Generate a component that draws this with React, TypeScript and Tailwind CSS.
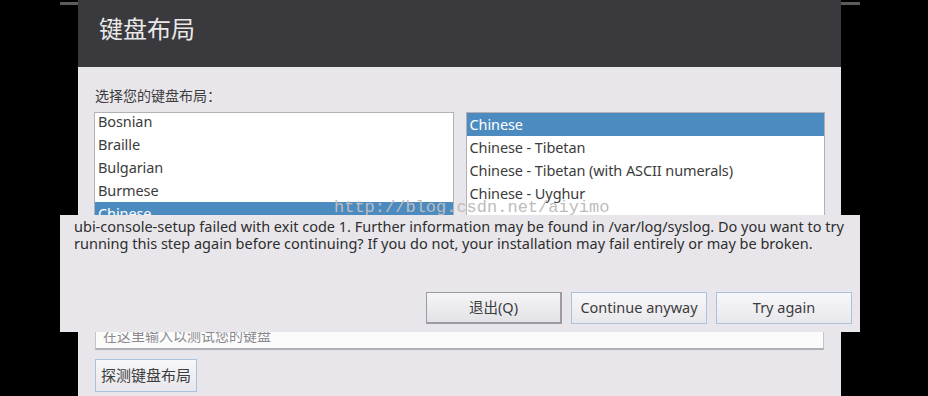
import React from 'react';

const leftItems = ['Bosnian', 'Braille', 'Bulgarian', 'Burmese', 'Chinese'];
const rightItems = ['Chinese', 'Chinese - Tibetan', 'Chinese - Tibetan (with ASCII numerals)', 'Chinese - Uyghur'];

const LayoutList = ({ items, selected, offset }: { items: string[]; selected: string; offset: string }) => {
  return (
    <div className="flex-1 h-[200px] bg-white border border-[#b3b1b6] overflow-hidden">
      <div className={offset}>
        {items.map((item) => (
          <div
            key={item}
            className={
              item === selected
                ? 'h-[23px] flex items-center px-[3px] bg-[#4c8bc0] text-white'
                : 'h-[23px] flex items-center px-[3px] text-[#3c3c3c]'
            }
          >
            {item}
          </div>
        ))}
      </div>
    </div>
  );
};

const DialogButton = ({ label, isDefault }: { label: string; isDefault?: boolean }) => {
  return (
    <button
      className={
        isDefault
          ? 'w-[136px] h-[32px] border border-[#9c9ba3] border-b-2 border-r-2 bg-gradient-to-b from-[#f5f4f6] to-[#e3e2e7] text-[#3c3c3c] text-[14.5px]'
          : 'w-[136px] h-[32px] border border-[#a9c2de] bg-gradient-to-b from-[#f7f7f9] to-[#e8e7ec] text-[#3c3c3c] text-[14.5px]'
      }
    >
      {label}
    </button>
  );
};

const App = () => {
  return (
    <div className="relative w-[928px] h-[396px] bg-black overflow-hidden font-['Noto_Sans','Noto_Sans_CJK_SC',sans-serif]">
      {/* bits of the window behind */}
      <div className="absolute left-[60px] top-[2px] w-[18px] h-[3px] bg-[#5c5c58]" />
      <div className="absolute left-[841px] top-[2px] w-[19px] h-[3px] bg-[#5c5c58]" />

      {/* installer window */}
      <div className="ml-[78px] w-[763px] h-[396px] flex flex-col">
        <div className="h-[67px] shrink-0 bg-[#3a393d] pl-[21px] pt-[12px]">
          <h1 className="text-[24px] leading-[32px] text-[#e8e8e8] font-['Noto_Sans_CJK_SC',sans-serif]">键盘布局</h1>
        </div>
        <div className="flex-1 bg-[#e8e6eb] px-4 pt-[19px]">
          <p className="text-[14px] leading-[20px] text-[#3c3c3c] pl-[1px]">选择您的键盘布局：</p>
          <div className="flex gap-3 mt-[6px] text-[14.5px] tracking-[-0.1px]">
            <LayoutList items={leftItems} selected="Chinese" offset="-mt-[3px]" />
            <LayoutList items={rightItems} selected="Chinese" offset="mt-0" />
          </div>
          <div className="mt-[10px] h-[28px] bg-[#fbfbfb] border border-[#c4c3c7] border-b-[#b0afb3] border-b-2 flex items-center pl-[7px] mx-[1px]">
            <span className="text-[14px] text-[#8a898d]">在这里输入以测试您的键盘</span>
          </div>
          <button className="mt-[9px] ml-[1px] h-[33px] px-[5px] border border-[#a9c2de] bg-gradient-to-b from-[#f7f7f9] to-[#e8e7ec] text-[15px] text-[#3c3c3c]">
            探测键盘布局
          </button>
        </div>
      </div>

      {/* watermark */}
      <div className="absolute left-[334px] top-[198px] text-[17px] leading-[20px] font-['Liberation_Mono',monospace] text-[#bdbdbd] whitespace-nowrap">
        http://blog.csdn.net/aiyimo
      </div>

      {/* error dialog on top */}
      <div className="absolute left-[60px] top-[215px] w-[800px] h-[117px] bg-[#e8e6eb] flex flex-col">
        <div className="pl-[14px] pt-[3px] text-[14.5px] leading-[17px] text-[#2e2e2e] whitespace-nowrap">
          <p>ubi-console-setup failed with exit code 1. Further information may be found in /var/log/syslog. Do you want to try</p>
          <p>running this step again before continuing? If you do not, your installation may fail entirely or may be broken.</p>
        </div>
        <div className="mt-auto flex justify-end gap-[9px] pr-[8px] pb-[8px]">
          <DialogButton label="退出(Q)" isDefault />
          <DialogButton label="Continue anyway" />
          <DialogButton label="Try again" />
        </div>
      </div>
    </div>
  );
};

export default App;
